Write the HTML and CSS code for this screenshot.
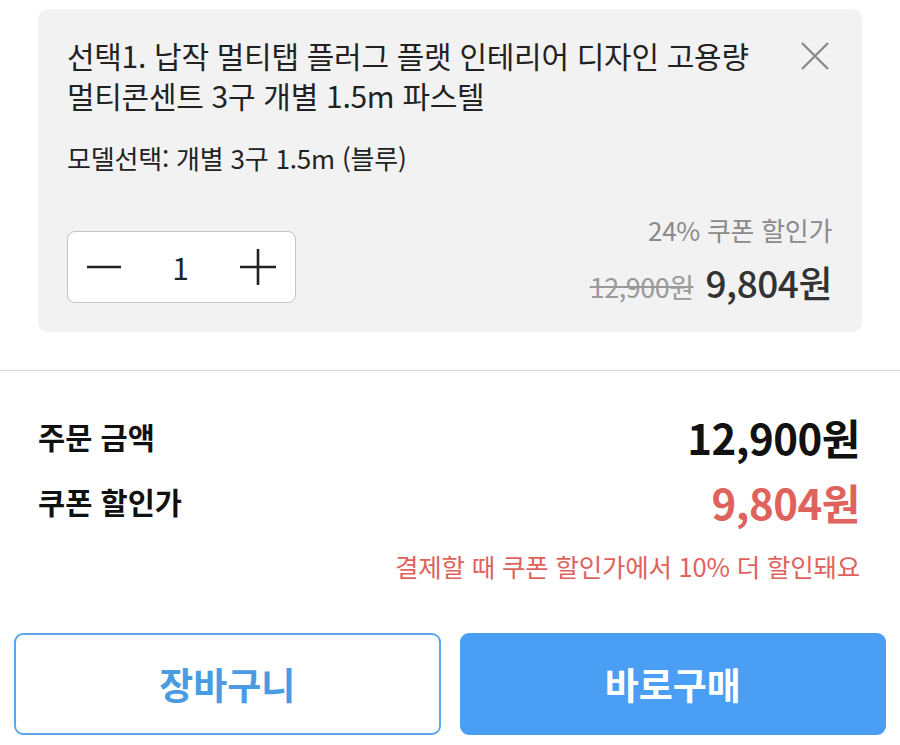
FILE: index.html
```html
<!DOCTYPE html>
<html lang="ko">
<head>
    <meta charset="UTF-8">
    <meta name="viewport" content="width=device-width, initial-scale=1.0">
    <title>장바구니 옵션</title>
    <link rel="stylesheet" href="styles.css">
</head>
<body>
    <div class="item">
        <div class="item-head">
            <p class="item-name">선택1. 납작 멀티탭 플러그 플랫 인테리어 디자인 고용량 멀티콘센트 3구 개별 1.5m 파스텔</p>
            <button class="remove" aria-label="삭제">
                <svg width="30" height="30" viewBox="0 0 30 30"><path d="M2 2L28 28M28 2L2 28" stroke="#8a8a8a" stroke-width="2.4" fill="none"/></svg>
            </button>
        </div>
        <p class="item-option">모델선택: 개별 3구 1.5m (블루)</p>
        <div class="item-foot">
            <div class="qty">
                <svg width="36" height="36" viewBox="0 0 36 36"><path d="M1 18H35" stroke="#222" stroke-width="2.6"/></svg>
                <span class="qty-num">1</span>
                <svg width="38" height="38" viewBox="0 0 38 38"><path d="M1 19H37M19 1V37" stroke="#222" stroke-width="2.6"/></svg>
            </div>
            <div class="price">
                <div class="price-label">24% 쿠폰 할인가</div>
                <div class="price-row"><s class="price-old">12,900원</s><span class="price-new">9,804원</span></div>
            </div>
        </div>
    </div>

    <hr class="divider">

    <div class="summary">
        <div class="summary-row">
            <span class="summary-label">주문 금액</span>
            <span class="summary-value">12,900원</span>
        </div>
        <div class="summary-row">
            <span class="summary-label">쿠폰 할인가</span>
            <span class="summary-value red">9,804원</span>
        </div>
        <p class="summary-note">결제할 때 쿠폰 할인가에서 10% 더 할인돼요</p>
    </div>

    <div class="actions">
        <button class="btn btn-outline">장바구니</button>
        <button class="btn btn-fill">바로구매</button>
    </div>
</body>
</html>
```

FILE: styles.css
```css
body {
    margin: 0;
    font-family: "Noto Sans CJK KR", "Noto Sans", sans-serif;
    color: #222;
    background: #fff;
}
p {
    margin: 0;
}

/* 상품 카드 */
.item {
    margin: 9px 38px 0;
    padding: 26px 30px 29px 29px;
    background: #f2f2f2;
    border-radius: 10px;
}
.item-head {
    display: flex;
    align-items: flex-start;
    gap: 24px;
}
.item-name {
    flex: 1;
    font-size: 30px;
    line-height: 40px;
    letter-spacing: -0.3px;
    word-break: keep-all;
    color: #222;
}
.remove {
    border: 0;
    background: none;
    padding: 0;
    margin-top: 6px;
    margin-right: 2px;
    width: 30px;
    height: 30px;
}
.item-option {
    margin-top: 28px;
    font-size: 26px;
    line-height: 30px;
    letter-spacing: -0.2px;
    color: #222;
}
.item-foot {
    margin-top: 42px;
    display: flex;
    justify-content: space-between;
    align-items: flex-end;
}
.qty {
    width: 229px;
    height: 72px;
    box-sizing: border-box;
    background: #fff;
    border: 1.5px solid #c4c4c4;
    border-radius: 8px;
    display: flex;
    align-items: center;
    justify-content: space-between;
    padding: 0 18px 0 18px;
}
.qty-num {
    font-size: 30px;
    color: #222;
}
.price {
    text-align: right;
}
.price-label {
    font-size: 26px;
    line-height: 30px;
    letter-spacing: -0.3px;
    color: #8a8a8a;
}
.price-row {
    margin-top: 16px;
    height: 42px;
    display: flex;
    justify-content: flex-end;
    align-items: baseline;
    white-space: nowrap;
}
.price-old {
    font-size: 27px;
    line-height: 42px;
    letter-spacing: -0.5px;
    color: #9a9a9a;
    margin-right: 12px;
}
.price-new {
    font-size: 37px;
    line-height: 42px;
    font-weight: 500;
    letter-spacing: -0.5px;
    color: #333;
}

.divider {
    margin: 38px 0 0;
    border: 0;
    border-top: 1px solid #d4d3e2;
}

/* 합계 */
.summary {
    padding: 40px 40px 0 38px;
}
.summary-row {
    display: flex;
    justify-content: space-between;
    align-items: center;
    height: 50px;
}
.summary-row + .summary-row {
    margin-top: 15px;
}
.summary-label {
    font-size: 29.5px;
    font-weight: 700;
    color: #111;
}
.summary-value {
    font-size: 42px;
    font-weight: 700;
    letter-spacing: -0.5px;
    color: #111;
}
.summary-value.red {
    color: #e0625d;
}
.summary-note {
    margin-top: 23px;
    text-align: right;
    font-size: 25.5px;
    line-height: 34px;
    letter-spacing: -0.2px;
    color: #e0625d;
}

/* 버튼 */
.actions {
    display: grid;
    grid-template-columns: 1fr 1fr;
    gap: 19px;
    padding: 0 14px;
    margin-top: 50px;
}
.btn {
    height: 102px;
    border-radius: 9px;
    font-family: inherit;
    font-size: 37px;
    font-weight: 700;
}
.btn-outline {
    background: #fff;
    border: 2px solid #5ba6e8;
    color: #4b9be2;
}
.btn-fill {
    background: #4a9ff5;
    border: 2px solid #4a9ff5;
    color: #fff;
}
```
